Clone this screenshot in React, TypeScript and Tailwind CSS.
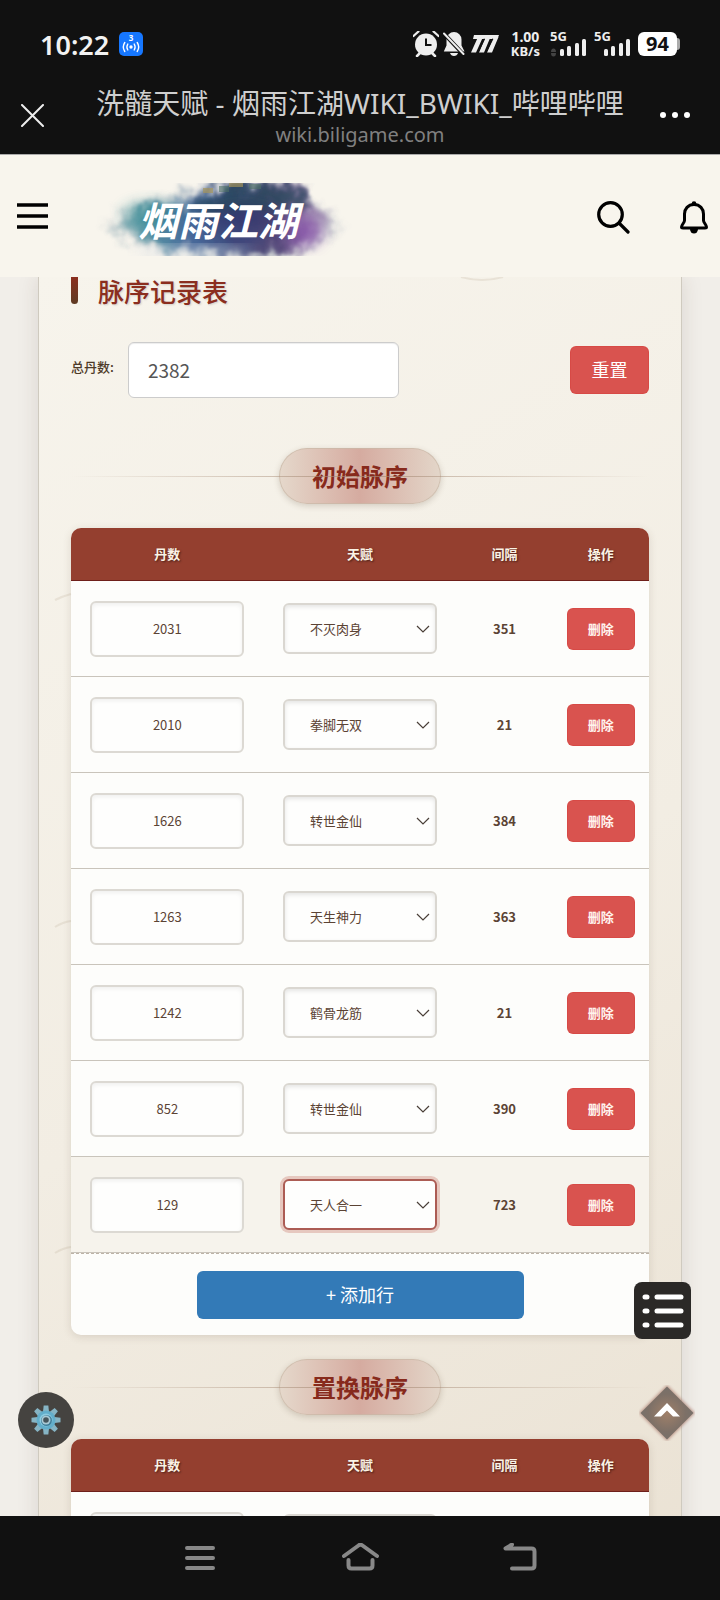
import React, { useState } from 'react';

interface Row {
  count: number;
  talent: string;
  gap: number;
}

const TALENTS = ['不灭肉身', '拳脚无双', '转世金仙', '天生神力', '鹤骨龙筋', '天人合一'];

const INITIAL_ROWS: Row[] = [
  { count: 2031, talent: '不灭肉身', gap: 351 },
  { count: 2010, talent: '拳脚无双', gap: 21 },
  { count: 1626, talent: '转世金仙', gap: 384 },
  { count: 1263, talent: '天生神力', gap: 363 },
  { count: 1242, talent: '鹤骨龙筋', gap: 21 },
  { count: 852, talent: '转世金仙', gap: 390 },
  { count: 129, talent: '天人合一', gap: 723 },
];

const SWAP_ROWS: Row[] = [{ count: 2031, talent: '不灭肉身', gap: 351 }];

const Signal: React.FC<{ dim?: boolean }> = ({ dim }) => (
  <svg width="38" height="34" viewBox="0 -4 38 34" className="shrink-0">
    <text x="0" y="10" fontSize="13" fontWeight="700" fill="#eee" fontFamily="Noto Sans">5G</text>
    {dim && <path d="M1 21a2.500 3.500 0 0 1 5 0zM1 22a2.500 3.500 0 0 0 5 0z" fill="#444" />}
    <g fill="#eee">
      <rect x="10" y="18" width="4" height="7" rx="1.5" />
      <rect x="17" y="15" width="4" height="10" rx="1.5" />
      <rect x="25" y="12" width="4" height="13" rx="1.5" />
      <rect x="32" y="8" width="4" height="17" rx="1.5" />
    </g>
  </svg>
);

const StatusBar = () => (
  <div className="flex h-[88px] items-center justify-between px-10">
    <div className="flex items-center gap-[10px]">
      <span className="text-[27px] font-semibold leading-none text-[#f2f2f2]">10:22</span>
      <svg width="24" height="24" viewBox="0 0 24 24">
        <rect width="24" height="24" rx="5" fill="#1677ff" />
        <text x="12" y="9" fontSize="8" fontWeight="700" fill="#fff" textAnchor="middle" fontFamily="Noto Sans">3</text>
        <circle cx="12" cy="15" r="1.7" fill="#fff" />
        <path d="M8.8 12q-1.8 3 0 6M15.2 12q1.8 3 0 6M5.8 10.5q-3 4.5 0 9M18.2 10.5q3 4.5 0 9" fill="none" stroke="#fff" strokeWidth="1.4" strokeLinecap="round" />
      </svg>
    </div>
    <div className="flex items-center">
      <svg width="26" height="26" viewBox="0 0 26 26" className="mr-1">
        <circle cx="13" cy="13.5" r="11" fill="#eee" />
        <path d="M5.5.5L.5 5M20.5.5L25.5 5" stroke="#eee" strokeWidth="2.2" strokeLinecap="round" />
        <path d="M4 25l3-3M22 25l-3-3" stroke="#eee" strokeWidth="2.5" strokeLinecap="round" />
        <path d="M13 7.5v6.5h5.5" fill="none" stroke="#111" strokeWidth="2" />
      </svg>
      <svg width="22" height="26" viewBox="0 0 22 26" className="mr-[6px]">
        <path d="M11 1a7.5 7.5 0 0 1 7.500 7.500v6l3 6H.8l2.700-6v-6A7.500 7.500 0 0 1 11 1zM7 22h8q-1 3-4 3t-4-3z" fill="#eee" />
        <path d="M0 1.500L21 24" stroke="#111" strokeWidth="4" />
        <path d="M1 2.500L20.500 23" stroke="#eee" strokeWidth="2" strokeLinecap="round" />
      </svg>
      <svg width="28" height="18" viewBox="0 0 28 18" className="mr-3">
        <path d="M3 0h25l-1.500 4H2zM7 2h5L5 17.500H0zM14.500 2h5l-6.500 15.500H8zM22.500 2h5L21 17.500h-5z" fill="#eee" />
        <path d="M13.500 3.800L7 17.500M21.800 3.800L15 17.500" stroke="#111" strokeWidth="1.300" />
      </svg>
      <div className="mr-[10px] text-center text-[14px] font-bold leading-[14px] text-[#eee]">
        <div>1.00</div>
        <div className="text-[13px]">KB/s</div>
      </div>
      <Signal dim />
      <span className="w-[6px]" />
      <Signal />
      <div className="ml-[6px] flex items-center">
        <span className="flex h-6 w-[39px] items-center justify-center rounded-md bg-white text-xl font-bold leading-none text-[#111]">94</span>
        <span className="h-3 w-[3px] rounded-r-md bg-[#aaa]" />
      </div>
    </div>
  </div>
);

const TitleBar = () => (
  <div className="flex h-[67px] items-start border-b border-[#aaa] pl-[21px] pr-[30px]">
    <button aria-label="关闭" className="mt-4">
      <svg width="23" height="23" viewBox="0 0 23 23">
        <path d="M1 1l21 21M22 1L1 22" stroke="#eee" strokeWidth="2" strokeLinecap="round" />
      </svg>
    </button>
    <div className="flex-1 pl-4 text-center">
      <div className="whitespace-nowrap text-[28px] leading-[30px] text-[#cfcfcf]">洗髓天赋 - 烟雨江湖WIKI_BWIKI_哔哩哔哩</div>
      <div className="pt-[2px] text-xl leading-[30px] text-[#808080]">wiki.biligame.com</div>
    </div>
    <button aria-label="更多" className="mt-6">
      <svg width="30" height="6" viewBox="0 0 30 6" fill="#fff">
        <circle cx="3" cy="3" r="3" />
        <circle cx="15" cy="3" r="3" />
        <circle cx="27" cy="3" r="3" />
      </svg>
    </button>
  </div>
);

const Logo = () => (
  <svg width="260" height="84" viewBox="0 0 260 84" role="img" aria-label="烟雨江湖">
    <defs>
      <filter id="ink" x="-10%" y="-30%" width="120%" height="160%">
        <feGaussianBlur in="SourceGraphic" stdDeviation="4" result="b" />
        <feTurbulence type="fractalNoise" baseFrequency="0.06" numOctaves="5" seed="7" result="n" />
        <feDisplacementMap in="b" in2="n" scale="26" xChannelSelector="R" yChannelSelector="G" />
        <feGaussianBlur stdDeviation="0.9" />
      </filter>
      <filter id="wash" x="-40%" y="-60%" width="180%" height="220%">
        <feGaussianBlur stdDeviation="7" />
      </filter>
      <linearGradient id="inkFill" x1="0" x2="1">
        <stop offset="0" stopColor="#8cb4b8" stopOpacity="0.4" />
        <stop offset="0.15" stopColor="#5a98a5" />
        <stop offset="0.35" stopColor="#46699a" />
        <stop offset="0.55" stopColor="#3f4a7c" />
        <stop offset="0.72" stopColor="#524777" />
        <stop offset="0.85" stopColor="#8a6da3" />
        <stop offset="1" stopColor="#b9b0c2" stopOpacity="0.3" />
      </linearGradient>
      <clipPath id="logoBox">
        <rect x="0" y="7" width="260" height="73" />
      </clipPath>
    </defs>
    <g clipPath="url(#logoBox)">
      <path d="M12 48Q26 34 52 28Q80 14 120 14Q170-2 208 12Q224 30 248 48Q232 66 212 74Q180 90 130 84Q80 86 46 72Z" fill="#9aa9b6" opacity="0.4" filter="url(#ink)" />
      <path d="M18 50Q46 26 90 26Q110 16 134 10L206 8Q214 26 230 36L244 50Q222 62 208 72Q150 86 110 76Q66 76 46 62Z" fill="url(#inkFill)" filter="url(#ink)" />
      <path d="M92 34Q110 20 142 12H206L216 30Q180 36 150 36Q110 38 92 34Z" fill="#25495a" opacity="0.75" filter="url(#ink)" />
      <ellipse cx="58" cy="38" rx="28" ry="11" fill="#2e8790" opacity="0.6" filter="url(#wash)" />
      <ellipse cx="150" cy="42" rx="34" ry="12" fill="#2c2d66" opacity="0.5" filter="url(#wash)" />
      <ellipse cx="212" cy="56" rx="18" ry="14" fill="#8a4fae" opacity="0.6" filter="url(#wash)" />
      <ellipse cx="100" cy="76" rx="60" ry="4" fill="#d9dfe6" opacity="0.8" filter="url(#wash)" />
      <path d="M110 12h10v5h-10zM136 7h14v4h-14z" fill="#a79558" opacity="0.65" />
      <path d="M126 10h10v6h-10zM156 8h12v5h-12z" fill="#4c6f66" opacity="0.6" />
    </g>
    <text x="125" y="60" fontSize="40" fontWeight="700" fontStyle="italic" textAnchor="middle" fill="#fff" fontFamily="Noto Sans CJK SC, sans-serif">烟雨江湖</text>
  </svg>
);

const SiteHeader = () => (
  <header className="flex h-[122px] shrink-0 items-center bg-[#f8f5ed] pl-[17px] pr-3">
    <button aria-label="菜单">
      <svg width="31" height="28" viewBox="0 0 31 28">
        <path d="M0 3h31M0 14h31M0 25h31" stroke="#000" strokeWidth="3.5" />
      </svg>
    </button>
    <a href="#" className="ml-[45px] mt-1">
      <Logo />
    </a>
    <button aria-label="搜索" className="ml-auto pt-[3px]">
      <svg width="33" height="33" viewBox="0 0 33 33" fill="none" stroke="#000" strokeWidth="3.2" strokeLinecap="round">
        <circle cx="13.5" cy="13.5" r="11.8" />
        <path d="M22 22l9 9" />
      </svg>
    </button>
    <button aria-label="通知" className="ml-[50px] pt-[3px]">
      <svg width="28" height="33" viewBox="0 0 28 33" fill="none" stroke="#000" strokeWidth="3" strokeLinejoin="round">
        <path d="M14 3.500C8 3.500 4.500 8 4.500 13v6.500c0 2-3 4.500-3 6.500q0 1 1.500 1h22q1.500 0 1.500-1c0-2-3-4.500-3-6.500V13C23.500 8 20 3.500 14 3.500z" />
        <path d="M10 28h8a4 4.500 0 0 1-8 0z" fill="#000" stroke="none" />
        <circle cx="14" cy="2.5" r="2.3" fill="#000" stroke="none" />
      </svg>
    </button>
  </header>
);

const SectionTitle: React.FC<{ children: React.ReactNode }> = ({ children }) => (
  <div className="relative flex justify-center">
    <h3 className="flex h-14 items-center rounded-full border border-[#c9b8a6]/70 bg-linear-to-r from-[#e5d8cb] via-[#d5aba0] to-[#e3d6c9] px-8 text-2xl font-bold text-[#872a1c] shadow-[0_2px_6px_rgba(80,60,40,0.2)]">
      {children}
    </h3>
    <span className="absolute inset-x-0 top-7 h-px bg-linear-to-r from-transparent via-[#a88d78]/70 to-transparent" />
  </div>
);

interface TableProps {
  name: string;
  rows: Row[];
  activeIndex?: number;
  onChange: (rows: Row[]) => void;
}

const PulseTable: React.FC<TableProps> = ({ name, rows, activeIndex, onChange }) => {
  const update = (idx: number, patch: Partial<Row>) =>
    onChange(rows.map((r, i) => (i === idx ? { ...r, ...patch } : r)));

  return (
    <div className="overflow-hidden rounded-[10px] bg-[#fdfdfb] shadow-[0_2px_8px_rgba(80,60,40,0.15)]">
      <table className="w-full table-fixed border-separate border-spacing-0 text-center text-[13px] text-[#5b4334]">
        <thead>
          <tr className="h-[53px] bg-[#943f2f] text-[#fbf3e6] [text-shadow:1px_1px_2px_rgba(0,0,0,0.5)]">
            <th className="w-1/3 border-b border-[#6e1f1a] font-bold">丹数</th>
            <th className="w-1/3 border-b border-[#6e1f1a] font-bold">天赋</th>
            <th className="w-1/6 border-b border-[#6e1f1a] font-bold">间隔</th>
            <th className="w-1/6 border-b border-[#6e1f1a] font-bold">操作</th>
          </tr>
        </thead>
        <tbody>
          {rows.map((row, idx) => {
            const active = idx === activeIndex;
            return (
              <tr key={idx} className={`h-24 ${active ? 'bg-[#f6f3ec]' : ''}`}>
                <td className="border-b border-[#c9c4bb]">
                  <input
                    type="text"
                    aria-label={`${name}丹数`}
                    value={row.count}
                    onChange={(e) => update(idx, { count: Number(e.target.value) || 0 })}
                    className="mx-auto block h-14 w-4/5 rounded-md border-2 border-[#dcd9d3] bg-[#fefefd] text-center shadow-[inset_0_2px_4px_rgba(0,0,0,0.06)] outline-none"
                  />
                </td>
                <td className="border-b border-[#c9c4bb]">
                  <div className="relative mx-auto w-4/5">
                    <select
                      aria-label={`${name}天赋`}
                      value={row.talent}
                      onChange={(e) => update(idx, { talent: e.target.value })}
                      className={`block h-[51px] w-full appearance-none rounded-md border-2 bg-[#fefefd] pl-[25px] outline-none ${
                        active
                          ? 'border-[#ac5c54] shadow-[0_0_0_3px_#e6c8bf]'
                          : 'border-[#dad7d1] shadow-[inset_0_2px_4px_rgba(0,0,0,0.1)]'
                      }`}
                    >
                      {TALENTS.map((t) => (
                        <option key={t} value={t}>{t}</option>
                      ))}
                    </select>
                    <svg width="14" height="8" viewBox="0 0 14 8" className="pointer-events-none absolute right-[7px] top-[22px]">
                      <path d="M1 1l6 6 6-6" fill="none" stroke="#4a3f38" strokeWidth="1.2" />
                    </svg>
                  </div>
                </td>
                <td className="border-b border-[#c9c4bb] font-bold">{row.gap}</td>
                <td className="border-b border-[#c9c4bb]">
                  <button
                    onClick={() => onChange(rows.filter((_, i) => i !== idx))}
                    className="h-[42px] w-[68px] rounded-md border border-[#d43f3a]/40 bg-[#d9534f] font-bold text-[#fff3ee]"
                  >
                    删除
                  </button>
                </td>
              </tr>
            );
          })}
        </tbody>
      </table>
      <div className="flex justify-center border-t border-dashed border-[#bdb3a6] pb-4 pt-[17px]">
        <button
          onClick={() => onChange([...rows, { count: 0, talent: TALENTS[0], gap: 0 }])}
          className="h-12 w-[327px] max-w-full rounded-md bg-[#337ab7] pb-[2px] text-lg text-white"
        >
          + 添加行
        </button>
      </div>
    </div>
  );
};

const FloatingButtons = () => (
  <>
    <button aria-label="目录" className="absolute bottom-[177px] right-[29px] flex size-[57px] items-center justify-center rounded-lg bg-[#2b2927]">
      <svg width="42" height="34" viewBox="0 0 42 34" stroke="#fff" strokeWidth="5" strokeLinecap="round">
        <path d="M3 3h2M15 3h24M3 17h2M15 17h24M3 31h2M15 31h24" />
      </svg>
    </button>
    <button aria-label="返回顶部" className="absolute bottom-[75px] right-[25px]">
      <svg width="56" height="56" viewBox="0 0 56 56">
        <defs>
          <radialGradient id="topFill">
            <stop offset="0" stopColor="#a08069" />
            <stop offset="0.7" stopColor="#7d7067" />
            <stop offset="1" stopColor="#77706a" />
          </radialGradient>
          <filter id="topGlow">
            <feGaussianBlur stdDeviation="1.5" />
          </filter>
        </defs>
        <path d="M28 0L56 28L28 56L0 28Z" fill="#a9786a" filter="url(#topGlow)" opacity="0.7" />
        <path d="M28 1.500L54.500 28L28 54.500L1.500 28Z" fill="url(#topFill)" />
        <path d="M28 18L41 31.500H34L28 25.500L22 31.500H15Z" fill="#fff" />
      </svg>
    </button>
    <button aria-label="设置" className="absolute bottom-[68px] left-[18px] flex size-14 items-center justify-center rounded-full bg-[#454340]">
      <svg width="30" height="30" viewBox="-15 -15 30 30">
        <g fill="#86b4c4">
          {[0, 45, 90, 135, 180, 225, 270, 315].map((deg) => (
            <path key={deg} d="M-2.300-14.500h4.600l.7 6h-6z" transform={`rotate(${deg})`} />
          ))}
        </g>
        <circle r="9.5" fill="#62aecb" />
        <circle r="6.5" fill="#8ccbe0" />
        <circle cx="0.5" cy="0.5" r="5.5" fill="#3f7f9b" />
        <circle r="4.5" fill="#a9c9d4" />
        <circle r="2.8" fill="#45555c" />
      </svg>
    </button>
  </>
);

const NavBar = () => (
  <nav className="flex h-[84px] shrink-0 items-center justify-center gap-[121px] bg-[#111]">
    <button aria-label="最近任务">
      <svg width="39" height="30" viewBox="0 0 39 30" stroke="#888" strokeWidth="4" strokeLinecap="round">
        <path d="M6 5h26M6 15h26M6 25h26" />
      </svg>
    </button>
    <button aria-label="主页">
      <svg width="39" height="30" viewBox="0 0 39 30" fill="none" stroke="#888" strokeWidth="4" strokeLinecap="round" strokeLinejoin="round">
        <path d="M3 13L17.500 2.500Q19.500 1 21.500 2.500L36 13" />
        <path d="M7.500 17v5.500q0 3 3 3h18q3 0 3-3V17" />
      </svg>
    </button>
    <button aria-label="返回">
      <svg width="39" height="30" viewBox="0 0 39 30" fill="none" stroke="#888" strokeWidth="4" strokeLinecap="round" strokeLinejoin="round">
        <path d="M11 1.500L4.500 5.500h26q3 0 3 3v14q0 3-3 3H11" />
      </svg>
    </button>
  </nav>
);

export default function App() {
  const [total, setTotal] = useState('2382');
  const [rows, setRows] = useState<Row[]>(INITIAL_ROWS);
  const [swapRows, setSwapRows] = useState<Row[]>(SWAP_ROWS);

  return (
    <div className="flex h-screen flex-col overflow-hidden bg-[#f1eee9] font-['Noto_Sans_CJK_SC','Noto_Sans',sans-serif]">
      <div className="shrink-0 bg-[#111] font-['Noto_Sans','Noto_Sans_CJK_SC',sans-serif]">
        <StatusBar />
        <TitleBar />
      </div>
      <SiteHeader />

      <div className="relative min-h-0 flex-1">
        <main className="h-full overflow-y-auto px-[38px] [scrollbar-width:none]">
          <div className="relative border-x border-[#cfcabf] bg-linear-150 from-[#f7f4ec] via-[#f2ede3] to-[#e9e0d1] px-8 pb-8 shadow-[0_0_20px_rgba(60,50,40,0.13)]">
            {/* faint brush strokes in the paper */}
            <svg className="pointer-events-none absolute left-0 top-0" width="500" height="1000" fill="none" stroke="#8b7355" strokeOpacity="0.12" strokeWidth="2">
              <path d="M422 0q21 6 42 0M16 323q8-4 16-6M16 650q8-5 16-6M16 976q8-5 16-6" />
            </svg>

            <h2 className="flex h-7 items-start gap-5 text-[26px] font-medium leading-7 text-[#8b2e1f] [text-shadow:1px_1px_2px_rgba(0,0,0,0.15)]">
              <span className="h-[27px] w-[7px] rounded-b bg-linear-to-b from-[#8b2e1f] to-[#5e3a22]" />
              脉序记录表
            </h2>

            <div className="mt-[37px] flex items-center">
              <label htmlFor="total" className="mb-[6px] text-[13px] font-medium text-[#4d3a28]">总丹数:</label>
              <input
                id="total"
                type="text"
                value={total}
                onChange={(e) => setTotal(e.target.value)}
                className="ml-[14px] h-14 w-[271px] rounded-md border border-[#ccc] bg-white px-[19px] pb-[2px] text-[19px] text-[#555] shadow-[inset_0_1px_1px_rgba(0,0,0,0.075)] outline-none"
              />
              <button
                onClick={() => setTotal('')}
                className="ml-auto h-12 w-[79px] rounded-md border border-[#d43f3a]/40 bg-[#d9534f] pb-[2px] text-lg text-white"
              >
                重置
              </button>
            </div>

            <div className="mt-[50px] space-y-6">
              <SectionTitle>初始脉序</SectionTitle>
              <PulseTable name="初始" rows={rows} activeIndex={6} onChange={setRows} />
              <SectionTitle>置换脉序</SectionTitle>
              <PulseTable name="置换" rows={swapRows} onChange={setSwapRows} />
            </div>
          </div>
        </main>
        <FloatingButtons />
      </div>

      <NavBar />
    </div>
  );
}
